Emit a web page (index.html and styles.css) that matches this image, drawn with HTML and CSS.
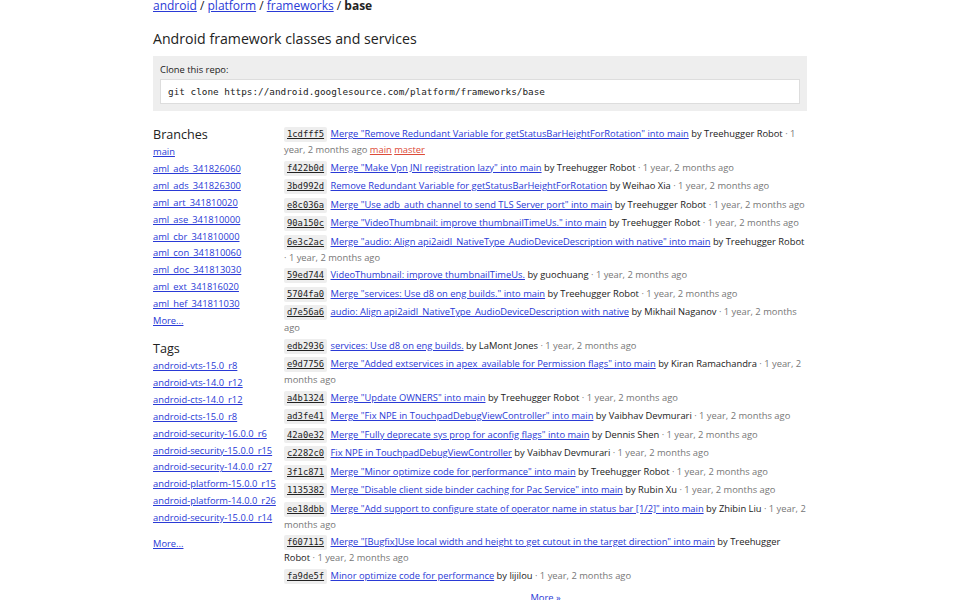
FILE: index.html
```
<!DOCTYPE html>
<html lang="en">
<head>
  <meta charset="UTF-8" />
  <title>base - platform/frameworks/base - Git at Google</title>
  <link rel="stylesheet" href="styles.css">
</head>
<body>
  <div class="Container">
    <div class="Breadcrumbs">
      <a href="#">android</a> / <a href="#">platform</a> / <a href="#">frameworks</a> / <span class="Breadcrumbs-crumb">base</span>
    </div>

    <h2 class="RepoDescription">Android framework classes and services</h2>

    <div class="CloneRepo">
      <div class="CloneRepo-title">Clone this repo:</div>
      <div class="CloneRepo-command">git clone https://android.googlesource.com/platform/frameworks/base</div>
    </div>

    <div class="RepoShortlog">
      <div class="RepoShortlog-refs">
        <h3 class="RefList-title">Branches</h3>
        <ul class="RefList">
          <li><a href="#">main</a></li>
          <li><a href="#">aml_ads_341826060</a></li>
          <li><a href="#">aml_ads_341826300</a></li>
          <li><a href="#">aml_art_341810020</a></li>
          <li><a href="#">aml_ase_341810000</a></li>
          <li><a href="#">aml_cbr_341810000</a></li>
          <li><a href="#">aml_con_341810060</a></li>
          <li><a href="#">aml_doc_341813030</a></li>
          <li><a href="#">aml_ext_341816020</a></li>
          <li><a href="#">aml_hef_341811030</a></li>
          <li><a href="#">More...</a></li>
        </ul>

        <h3 class="RefList-title">Tags</h3>
        <ul class="RefList">
          <li><a href="#">android-vts-15.0_r8</a></li>
          <li><a href="#">android-vts-14.0_r12</a></li>
          <li><a href="#">android-cts-14.0_r12</a></li>
          <li><a href="#">android-cts-15.0_r8</a></li>
          <li><a href="#">android-security-16.0.0_r6</a></li>
          <li><a href="#">android-security-15.0.0_r15</a></li>
          <li><a href="#">android-security-14.0.0_r27</a></li>
          <li><a href="#">android-platform-15.0.0_r15</a></li>
          <li><a href="#">android-platform-14.0.0_r26</a></li>
          <li><a href="#">android-security-15.0.0_r14</a></li>
          <li class="RefList-more"><a href="#">More...</a></li>
        </ul>
      </div>

      <div class="RepoShortlog-log">
        <ol class="CommitLog">
          <li class="CommitLog-item"><a class="CommitLog-sha1" href="#">1cdfff5</a> <a href="#">Merge "Remove Redundant Variable for getStatusBarHeightForRotation" into main</a> <span class="CommitLog-author">by Treehugger Robot</span> <span class="CommitLog-time">· 1 year, 2 months ago</span> <a class="CommitLog-branchLabel" href="#">main</a> <a class="CommitLog-branchLabel" href="#">master</a></li>
          <li class="CommitLog-item"><a class="CommitLog-sha1" href="#">f422b0d</a> <a href="#">Merge "Make Vpn JNI registration lazy" into main</a> <span class="CommitLog-author">by Treehugger Robot</span> <span class="CommitLog-time">· 1 year, 2 months ago</span></li>
          <li class="CommitLog-item"><a class="CommitLog-sha1" href="#">3bd992d</a> <a href="#">Remove Redundant Variable for getStatusBarHeightForRotation</a> <span class="CommitLog-author">by Weihao Xia</span> <span class="CommitLog-time">· 1 year, 2 months ago</span></li>
          <li class="CommitLog-item"><a class="CommitLog-sha1" href="#">e8c036a</a> <a href="#">Merge "Use adb_auth channel to send TLS Server port" into main</a> <span class="CommitLog-author">by Treehugger Robot</span> <span class="CommitLog-time">· 1 year, 2 months ago</span></li>
          <li class="CommitLog-item"><a class="CommitLog-sha1" href="#">90a150c</a> <a href="#">Merge "VideoThumbnail: improve thumbnailTimeUs." into main</a> <span class="CommitLog-author">by Treehugger Robot</span> <span class="CommitLog-time">· 1 year, 2 months ago</span></li>
          <li class="CommitLog-item"><a class="CommitLog-sha1" href="#">6e3c2ac</a> <a href="#">Merge "audio: Align api2aidl_NativeType_AudioDeviceDescription with native" into main</a> <span class="CommitLog-author">by Treehugger Robot</span> <span class="CommitLog-time">· 1 year, 2 months ago</span></li>
          <li class="CommitLog-item"><a class="CommitLog-sha1" href="#">59ed744</a> <a href="#">VideoThumbnail: improve thumbnailTimeUs.</a> <span class="CommitLog-author">by guochuang</span> <span class="CommitLog-time">· 1 year, 2 months ago</span></li>
          <li class="CommitLog-item"><a class="CommitLog-sha1" href="#">5704fa0</a> <a href="#">Merge "services: Use d8 on eng builds." into main</a> <span class="CommitLog-author">by Treehugger Robot</span> <span class="CommitLog-time">· 1 year, 2 months ago</span></li>
          <li class="CommitLog-item"><a class="CommitLog-sha1" href="#">d7e56a6</a> <a href="#">audio: Align api2aidl_NativeType_AudioDeviceDescription with native</a> <span class="CommitLog-author">by Mikhail Naganov</span> <span class="CommitLog-time">· 1 year, 2 months ago</span></li>
          <li class="CommitLog-item"><a class="CommitLog-sha1" href="#">edb2936</a> <a href="#">services: Use d8 on eng builds.</a> <span class="CommitLog-author">by LaMont Jones</span> <span class="CommitLog-time">· 1 year, 2 months ago</span></li>
          <li class="CommitLog-item"><a class="CommitLog-sha1" href="#">e9d7756</a> <a href="#">Merge "Added extservices in apex_available for Permission flags" into main</a> <span class="CommitLog-author">by Kiran Ramachandra</span> <span class="CommitLog-time">· 1 year, 2 months ago</span></li>
          <li class="CommitLog-item"><a class="CommitLog-sha1" href="#">a4b1324</a> <a href="#">Merge "Update OWNERS" into main</a> <span class="CommitLog-author">by Treehugger Robot</span> <span class="CommitLog-time">· 1 year, 2 months ago</span></li>
          <li class="CommitLog-item"><a class="CommitLog-sha1" href="#">ad3fe41</a> <a href="#">Merge "Fix NPE in TouchpadDebugViewController" into main</a> <span class="CommitLog-author">by Vaibhav Devmurari</span> <span class="CommitLog-time">· 1 year, 2 months ago</span></li>
          <li class="CommitLog-item"><a class="CommitLog-sha1" href="#">42a0e32</a> <a href="#">Merge "Fully deprecate sys prop for aconfig flags" into main</a> <span class="CommitLog-author">by Dennis Shen</span> <span class="CommitLog-time">· 1 year, 2 months ago</span></li>
          <li class="CommitLog-item"><a class="CommitLog-sha1" href="#">c2282c0</a> <a href="#">Fix NPE in TouchpadDebugViewController</a> <span class="CommitLog-author">by Vaibhav Devmurari</span> <span class="CommitLog-time">· 1 year, 2 months ago</span></li>
          <li class="CommitLog-item"><a class="CommitLog-sha1" href="#">3f1c871</a> <a href="#">Merge "Minor optimize code for performance" into main</a> <span class="CommitLog-author">by Treehugger Robot</span> <span class="CommitLog-time">· 1 year, 2 months ago</span></li>
          <li class="CommitLog-item"><a class="CommitLog-sha1" href="#">1135382</a> <a href="#">Merge "Disable client side binder caching for Pac Service" into main</a> <span class="CommitLog-author">by Rubin Xu</span> <span class="CommitLog-time">· 1 year, 2 months ago</span></li>
          <li class="CommitLog-item"><a class="CommitLog-sha1" href="#">ee18dbb</a> <a href="#">Merge "Add support to configure state of operator name in status bar [1/2]" into main</a> <span class="CommitLog-author">by Zhibin Liu</span> <span class="CommitLog-time">· 1 year, 2 months ago</span></li>
          <li class="CommitLog-item"><a class="CommitLog-sha1" href="#">f607115</a> <a href="#">Merge "[Bugfix]Use local width and height to get cutout in the target direction" into main</a> <span class="CommitLog-author">by Treehugger Robot</span> <span class="CommitLog-time">· 1 year, 2 months ago</span></li>
          <li class="CommitLog-item"><a class="CommitLog-sha1" href="#">fa9de5f</a> <a href="#">Minor optimize code for performance</a> <span class="CommitLog-author">by lijilou</span> <span class="CommitLog-time">· 1 year, 2 months ago</span></li>
        </ol>
        <div class="LogNav"><a href="#">More »</a></div>
      </div>
    </div>
  </div>
</body>
</html>
```

FILE: styles.css
```
body {
  margin: 0;
  font-family: "Open Sans", "Noto Sans", sans-serif;
  font-size: 9.35px;
  color: #222;
  background: #fff;
}

a {
  color: #2a3ad6;
}

.Container {
  width: 654px;
  margin: 0 auto;
}

.Breadcrumbs {
  font-size: 12px;
  line-height: 18px;
  margin-top: -3px;
  color: #222;
}

.Breadcrumbs-crumb {
  font-weight: bold;
}

.RepoDescription {
  font-size: 14.15px;
  font-weight: normal;
  line-height: 18px;
  margin: 15px 0 8px;
}

.CloneRepo {
  background: #eee;
  padding: 6px 7px 7px;
}

.CloneRepo-title {
  line-height: 16px;
  margin-bottom: 1px;
}

.CloneRepo-command {
  background: #fff;
  border: 1px solid #ddd;
  font-family: "DejaVu Sans Mono", monospace;
  font-size: 9.35px;
  line-height: 23px;
  padding: 0 7px;
}

.RepoShortlog {
  display: flex;
  margin-top: 14px;
}

.RepoShortlog-refs {
  width: 131px;
  flex-shrink: 0;
}

.RefList-title {
  font-size: 12.6px;
  font-weight: normal;
  line-height: 18px;
  margin: 1px 0 0;
}

.RefList {
  list-style: none;
  margin: 0 0 10px;
  padding: 0;
}

.RefList li {
  line-height: 16.9px;
}

.RefList-more {
  margin-top: 9px;
}

.RepoShortlog-log {
  flex: 1;
  padding-top: 1px;
}

.CommitLog {
  list-style: none;
  margin: 0;
  padding: 0;
}

.CommitLog-item {
  line-height: 15px;
  margin-bottom: 2.5px;
}

.CommitLog-sha1 {
  display: inline-block;
  font-family: "DejaVu Sans Mono", monospace;
  font-size: 8.8px;
  line-height: 13px;
  padding: 1px 3px;
  background: #eee;
  color: #222;
  border-radius: 2px;
  margin-right: 1px;
}

.CommitLog-author {
  color: #222;
}

.CommitLog-time {
  color: #777;
}

.CommitLog-branchLabel {
  color: #dd4b39;
}

.LogNav {
  text-align: center;
  margin-top: 7px;
}
```
